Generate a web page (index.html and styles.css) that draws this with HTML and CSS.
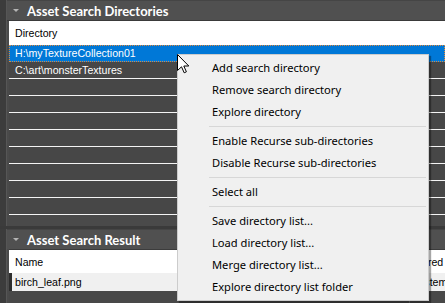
FILE: index.html
```html
<!DOCTYPE html>
<html>
<head>
<meta charset="utf-8">
<link rel="stylesheet" href="styles.css">
</head>
<body>
<div class="app">
  <section class="panel panel-dirs">
    <div class="panel-title"><span class="tri"></span><span class="title-text">Asset Search Directories</span></div>
    <div class="list">
      <div class="list-head"><span class="cell">Directory</span></div>
      <div class="row selected"><span class="cell">H:\myTextureCollection01</span></div>
      <div class="row"><span class="cell">C:\art\monsterTextures</span></div>
      <div class="row"></div>
      <div class="row"></div>
      <div class="row"></div>
      <div class="row"></div>
      <div class="row"></div>
      <div class="row"></div>
      <div class="row"></div>
      <div class="row"></div>
    </div>
    <div class="panel-foot"></div>
  </section>
  <div class="panel-gap"></div>
  <section class="panel panel-result">
    <div class="panel-title"><span class="tri"></span><span class="title-text">Asset Search Result</span></div>
    <div class="list list-result">
      <div class="res-head"><span class="rcell c1">Name</span><span class="rcell c2">Stored</span></div>
      <div class="res-row"><span class="mark"></span><span class="rcell c1">birch_leaf.png</span><span class="rcell c2">System</span></div>
      <div class="res-empty"><span class="e1"></span><span class="e2"></span></div>
    </div>
  </section>

  <div class="menu">
    <div class="mi">Add search directory</div>
    <div class="mi">Remove search directory</div>
    <div class="mi">Explore directory</div>
    <div class="sep"></div>
    <div class="mi">Enable Recurse sub-directories</div>
    <div class="mi">Disable Recurse sub-directories</div>
    <div class="sep"></div>
    <div class="mi">Select all</div>
    <div class="sep"></div>
    <div class="mi">Save directory list...</div>
    <div class="mi">Load directory list...</div>
    <div class="mi">Merge directory list...</div>
    <div class="mi">Explore directory list folder</div>
  </div>
  <svg class="cursor" width="13" height="20" viewBox="0 0 13 20">
    <path d="M0.5 0.5 L0.5 16.5 L4.5 12.8 L7.2 18.8 L9.4 17.8 L6.8 12 L11.8 12 Z" fill="#fff" stroke="#000" stroke-width="1" stroke-linejoin="miter"/>
  </svg>
</div>
</body>
</html>
```

FILE: styles.css
```css
html, body {
  margin: 0;
  padding: 0;
}
body {
  width: 445px;
  height: 303px;
  overflow: hidden;
  background: #3c3c3c;
  font-family: "Liberation Sans", Arial, sans-serif;
}
.app {
  position: relative;
  width: 445px;
  height: 303px;
  display: flex;
  flex-direction: column;
  overflow: hidden;
}
.panel {
  margin-left: 6px;
  border-left: 1px solid #565656;
  background: #4a4a4a;
  display: flex;
  flex-direction: column;
}
.panel-title {
  height: 20px;
  display: flex;
  align-items: center;
  background: #505050;
  border-top: 1px solid #454545;
  box-sizing: border-box;
}
.panel-dirs .panel-title {
  height: 21px;
  border-bottom: 1px solid #3a3a3a;
}
.tri {
  width: 0;
  height: 0;
  margin-left: 6px;
  border-left: 3px solid transparent;
  border-right: 3px solid transparent;
  border-top: 3px solid #b4b4b4;
  margin-top: -1px;
}
.title-text {
  margin-left: 8px;
  color: #ffffff;
  font-family: Lato, "Noto Sans", sans-serif;
  font-weight: bold;
  font-size: 13px;
}
.list {
  margin-left: 2px;
  display: flex;
  flex-direction: column;
  font-size: 10.6px;
}
.list-head {
  height: 24px;
  background: #ffffff;
  display: flex;
  align-items: center;
  color: #000;
}
.cell {
  padding-left: 6px;
  white-space: nowrap;
}
.row {
  height: 16px;
  border-bottom: 1px solid #f4f4f4;
  background: #474747;
  color: #ffffff;
  display: flex;
  align-items: center;
}
.row.selected {
  background: #0078d7;
  border-bottom-color: #0078d7;
  outline: 1px dotted #e08a3c;
  outline-offset: -1px;
}
.panel-foot {
  height: 11px;
  background: #4a4a4a;
}
.panel-gap {
  height: 3px;
  background: #3a3a3a;
}
.panel-result {
  flex: 1;
}
.list-result {
  flex: 1;
  background: #484848;
}
.res-head {
  height: 24px;
  background: #ffffff;
  display: flex;
  align-items: center;
  border-top: 1px solid #3c3c3c;
  box-sizing: border-box;
  color: #000;
}
.rcell {
  white-space: nowrap;
  overflow: hidden;
}
.rcell.c1 {
  width: 398px;
  padding-left: 6px;
  box-sizing: border-box;
}
.rcell.c2 {
  padding-left: 5px;
  flex: 1;
}
.res-row {
  height: 18px;
  background: #f0f0f0;
  display: flex;
  align-items: center;
  color: #000;
}
.res-row .mark {
  width: 3px;
  height: 18px;
  background: #2e2e2e;
}
.res-row .rcell.c1 {
  width: 395px;
  padding-left: 3px;
}
.res-empty {
  flex: 1;
  display: flex;
}
.res-empty .e1 {
  width: 400px;
  border-right: 1px solid #6a6a6a;
}
.menu {
  position: absolute;
  left: 177px;
  top: 54px;
  width: 252px;
  box-sizing: border-box;
  background: #f0f0f0;
  border: 1px solid #cccccc;
  padding: 2px;
  box-shadow: 2px 2px 1px rgba(0, 0, 0, 0.35);
  font-family: "Noto Sans", sans-serif;
  font-size: 11.15px;
  color: #000;
}
.mi {
  height: 22px;
  line-height: 22px;
  padding-left: 32px;
  white-space: nowrap;
}
.sep {
  height: 7px;
  display: flex;
  align-items: center;
  margin-left: 29px;
}
.sep::before {
  content: "";
  flex: 1;
  height: 1px;
  background: #d7d7d7;
}
.cursor {
  position: absolute;
  left: 177px;
  top: 54px;
}
```
